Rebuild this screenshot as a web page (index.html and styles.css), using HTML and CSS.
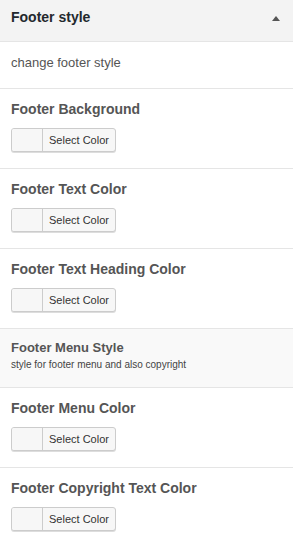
FILE: index.html
```html
<!DOCTYPE html>
<html>
<head>
<meta charset="utf-8">
<link rel="stylesheet" href="styles.css">
</head>
<body>
<div class="panel">
  <div class="header">
    <span class="header-title">Footer style</span>
    <span class="arrow"></span>
  </div>
  <div class="intro">change footer style</div>

  <div class="section">
    <div class="title">Footer Background</div>
    <div class="picker"><span class="swatch"></span><span class="label">Select Color</span></div>
  </div>
  <div class="section">
    <div class="title">Footer Text Color</div>
    <div class="picker"><span class="swatch"></span><span class="label">Select Color</span></div>
  </div>
  <div class="section">
    <div class="title">Footer Text Heading Color</div>
    <div class="picker"><span class="swatch"></span><span class="label">Select Color</span></div>
  </div>
  <div class="group">
    <div class="group-title">Footer Menu Style</div>
    <div class="group-desc">style for footer menu and also copyright</div>
  </div>
  <div class="section">
    <div class="title">Footer Menu Color</div>
    <div class="picker"><span class="swatch"></span><span class="label">Select Color</span></div>
  </div>
  <div class="section last">
    <div class="title">Footer Copyright Text Color</div>
    <div class="picker"><span class="swatch"></span><span class="label">Select Color</span></div>
  </div>
</div>
</body>
</html>
```

FILE: styles.css
```css
html, body {
  margin: 0;
  padding: 0;
  background: #fff;
}
body {
  font-family: "Liberation Sans", Arial, sans-serif;
  color: #555;
}
.panel {
  width: 293px;
}
.header {
  box-sizing: border-box;
  height: 42px;
  padding: 9px 13px 0 11px;
  background: #f3f3f3;
  border-bottom: 1px solid #e5e5e5;
  display: flex;
  justify-content: space-between;
  align-items: flex-start;
}
.header-title {
  font-size: 14px;
  line-height: 17px;
  font-weight: bold;
  color: #23282d;
}
.arrow {
  width: 0;
  height: 0;
  margin-top: 7px;
  border-left: 4px solid transparent;
  border-right: 4px solid transparent;
  border-bottom: 5px solid #555;
}
.intro {
  box-sizing: border-box;
  height: 47px;
  padding: 13px 11px 0;
  font-size: 13px;
  line-height: 16px;
  color: #555;
  border-bottom: 1px solid #e5e5e5;
}
.section {
  box-sizing: border-box;
  height: 80px;
  padding: 12px 11px 0;
  border-bottom: 1px solid #e5e5e5;
}
.section.last {
  border-bottom: none;
}
.title {
  font-size: 14px;
  line-height: 17px;
  font-weight: bold;
  color: #555;
  margin-bottom: 10px;
}
.picker {
  box-sizing: border-box;
  display: flex;
  width: 105px;
  height: 24px;
  border: 1px solid #ccc;
  border-radius: 3px;
  background: #f7f7f7;
  box-shadow: 0 1px 0 #ddd;
  overflow: hidden;
}
.swatch {
  width: 30px;
  border-right: 1px solid #ccc;
  background: #f7f7f7;
}
.label {
  flex: 1;
  padding-left: 6px;
  font-size: 11px;
  line-height: 22px;
  color: #333;
}
.group {
  box-sizing: border-box;
  height: 59px;
  padding: 11px 11px 0;
  background: #f9f9f9;
  border-bottom: 1px solid #e5e5e5;
}
.group-title {
  font-size: 13px;
  line-height: 16px;
  font-weight: bold;
  color: #555;
}
.group-desc {
  margin-top: 3px;
  font-size: 10px;
  line-height: 12px;
  color: #444;
}
```
